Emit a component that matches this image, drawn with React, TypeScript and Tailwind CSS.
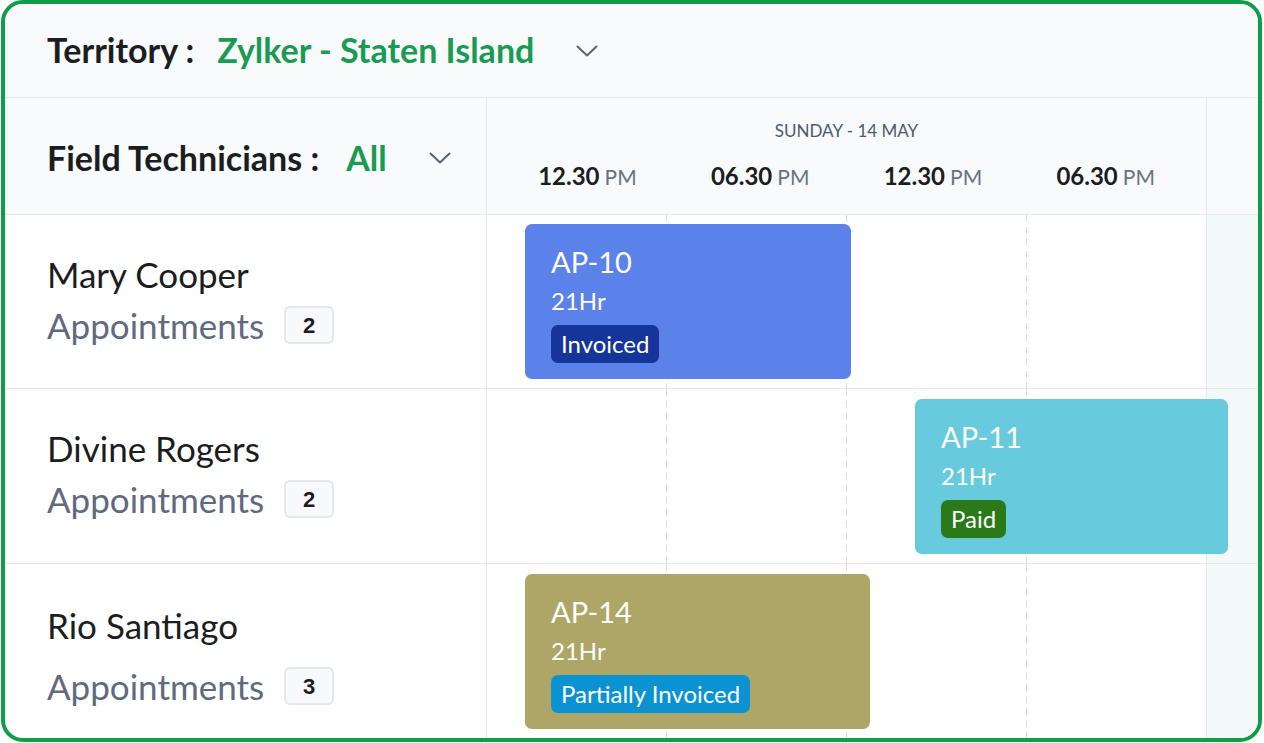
import React from 'react';

interface Appointment {
  code: string;
  hours: string;
  status: string;
  left: number;
  width: number;
  top: number;
  card: string;
  badge: string;
}

interface Technician {
  name: string;
  count: number;
  appointment: Appointment;
}

const technicians: Technician[] = [
  {
    name: 'Mary Cooper',
    count: 2,
    appointment: { code: 'AP-10', hours: '21Hr', status: 'Invoiced', left: 38, width: 326, top: 9, card: 'bg-[#5b82e8]', badge: 'bg-[#15359a]' }
  },
  {
    name: 'Divine Rogers',
    count: 2,
    appointment: { code: 'AP-11', hours: '21Hr', status: 'Paid', left: 428, width: 313, top: 10, card: 'bg-[#67cadd]', badge: 'bg-[#2b7a1a]' }
  },
  {
    name: 'Rio Santiago',
    count: 3,
    appointment: { code: 'AP-14', hours: '21Hr', status: 'Partially Invoiced', left: 38, width: 345, top: 10, card: 'bg-[#aea667]', badge: 'bg-[#0a92d3]' }
  }
];

const slots = ['12.30', '06.30', '12.30', '06.30'];

const Chevron = () => (
  <svg width="22" height="12" viewBox="0 0 22 12" fill="none">
    <path d="M1.5 1.5 11 10.5 20.5 1.5" stroke="#5b6270" strokeWidth="2" strokeLinecap="round" strokeLinejoin="round" />
  </svg>
);

// dashed grid divider, longer dashes than border-dashed gives
const Dash = () => (
  <div className="w-px shrink-0 bg-[repeating-linear-gradient(to_bottom,#d6dce1_0_7px,transparent_7px_12px)]" />
);

const Row = ({ tech, last }: { tech: Technician; last: boolean }) => {
  const a = tech.appointment;
  return (
    <div className={`flex h-[175px] ${last ? '' : 'border-b border-[#e3e8ec]'}`}>
      <div className={`w-[482px] shrink-0 border-r border-[#e3e8ec] flex flex-col justify-center pl-[42px] pb-[4px] ${last ? 'pt-[14px]' : ''}`}>
        <div className="text-[35px] leading-[40px] text-[#1b1d21]">{tech.name}</div>
        <div className={`flex items-center ${last ? 'mt-[21px]' : 'mt-[11px]'}`}>
          <span className="text-[35px] leading-[40px] text-[#5f6a80]">Appointments</span>
          <span className="ml-[20px] w-[50px] h-[38px] rounded-[6px] border-2 border-[#e4e8eb] bg-[#f7f9fa] flex items-center justify-center text-[22px] font-bold text-[#1b1d21] font-['Liberation_Sans',Arial,sans-serif]">
            {tech.count}
          </span>
        </div>
      </div>
      <div className="relative flex-1 flex">
        <div className="w-[179px]" />
        <Dash />
        <div className="w-[179px]" />
        <Dash />
        <div className="w-[179px]" />
        <Dash />
        <div className="w-[180px] border-r border-[#e3e8ec]" />
        <div className="flex-1 bg-[#f3f9f9]" />
        <div
          className={`absolute h-[155px] rounded-[7px] ${a.card} pl-[26px] pt-[21px] text-white`}
          style={{ left: a.left, width: a.width, top: a.top }}
        >
          <div className="text-[29px] leading-[34px]">{a.code}</div>
          <div className="text-[24px] leading-[28px] mt-[8px]">{a.hours}</div>
          <div className={`inline-flex items-center h-[38px] mt-[10px] px-[10px] rounded-[7px] ${a.badge} text-[24px]`}>
            {a.status}
          </div>
        </div>
      </div>
    </div>
  );
};

export default function App() {
  return (
    <div className="w-[1264px] h-[743px] bg-white font-['Lato','Noto_Sans',sans-serif]">
      <div className="ml-[1px] w-[1261px] h-[742px] border-4 border-[#0f9d4a] rounded-[22px] overflow-hidden flex flex-col bg-white">
        <div className="h-[94px] shrink-0 bg-[#f8fafb] border-b border-[#e3e8ec] flex items-center pl-[42px] pb-[2px]">
          <span className="text-[34px] font-bold text-[#1b1d21]">Territory :</span>
          <span className="ml-[23px] text-[34px] font-bold text-[#1a9a52]">Zylker - Staten Island</span>
          <span className="ml-[42px] mt-[2px]"><Chevron /></span>
        </div>

        <div className="h-[117px] shrink-0 flex bg-[#f8fafb] border-b border-[#e3e8ec]">
          <div className="w-[482px] shrink-0 border-r border-[#e3e8ec] flex items-center pl-[42px] pt-[2px]">
            <span className="text-[34px] font-bold text-[#1b1d21]">Field Technicians :</span>
            <span className="ml-[27px] text-[34px] font-bold text-[#1a9a52]">All</span>
            <span className="ml-[42px] mt-[2px]"><Chevron /></span>
          </div>
          <div className="w-[720px] shrink-0 border-r border-[#e3e8ec] flex flex-col pt-[22px]">
            <div className="text-center text-[17px] leading-[22px] text-[#4d5a6e]">SUNDAY - 14 MAY</div>
            <div className="grid grid-cols-4 px-[14px] mt-[18px]">
              {slots.map((s, i) => (
                <div key={i} className="text-center whitespace-nowrap leading-[32px]">
                  <span className="text-[24px] font-bold text-[#1b1d21]">{s}</span>
                  <span className="ml-[5px] text-[21px] text-[#6b7280]">PM</span>
                </div>
              ))}
            </div>
          </div>
          <div className="flex-1" />
        </div>

        {technicians.map((t, i) => (
          <Row key={t.name} tech={t} last={i === technicians.length - 1} />
        ))}
      </div>
    </div>
  );
}
